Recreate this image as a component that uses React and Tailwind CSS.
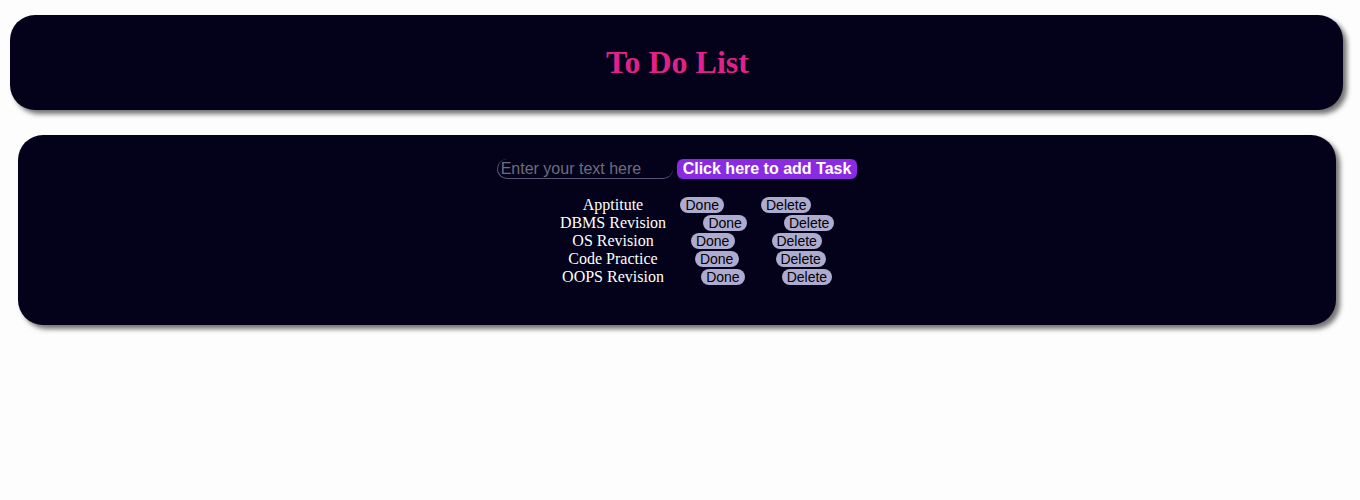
import React, { useState } from 'react';

const initialTasks = ['Apptitute', 'DBMS Revision', 'OS Revision', 'Code Practice', 'OOPS Revision'];

function TaskRow({ name }) {
  return (
    <li className="flex items-center justify-center h-[18px]">
      <span className="text-white text-[16px] leading-[18px]">{name}</span>
      <button className="ml-[37px] h-[16px] w-[44px] rounded-full bg-[#aeabd0] text-black text-[14px] leading-[16px] font-['Liberation_Sans',Arial,sans-serif]">
        Done
      </button>
      <button className="ml-[37px] h-[16px] w-[50px] rounded-full bg-[#aeabd0] text-black text-[14px] leading-[16px] font-['Liberation_Sans',Arial,sans-serif]">
        Delete
      </button>
    </li>
  );
}

export default function App() {
  const [text, setText] = useState('');
  const [tasks, setTasks] = useState(initialTasks);

  return (
    <div className="min-h-[500px] bg-[#fdfdfd] pt-[15px] font-['Liberation_Serif','Times_New_Roman',serif]">
      <header className="ml-[10px] w-[1333px] h-[95px] rounded-[25px] bg-[#03021a] shadow-[4px_4px_5px_rgba(0,0,0,0.55)] flex items-center justify-center">
        <h1 className="text-[32px] font-bold text-[#e0218a] leading-none pb-[1px] pl-[2px]">To Do List</h1>
      </header>

      <main className="ml-[18px] mt-[25px] w-[1318px] h-[190px] rounded-[25px] bg-[#03021a] shadow-[4px_4px_5px_rgba(0,0,0,0.55)] pt-[24px]">
        <div className="flex items-center justify-center gap-[4px]">
          <input
            value={text}
            onChange={(e) => setText(e.target.value)}
            placeholder="Enter your text here"
            className="w-[176px] h-[20px] bg-transparent border-l border-b border-[#5a5578] rounded-[10px] text-white text-[16px] px-[3px] placeholder:text-[#6f6c7e] font-['Liberation_Sans',Arial,sans-serif] outline-none"
          />
          <button
            onClick={() => {
              if (text.trim()) {
                setTasks([...tasks, text.trim()]);
                setText('');
              }
            }}
            className="h-[20px] px-[6px] rounded-[6px] bg-[#8a2be2] text-white font-bold text-[16px] leading-[20px] font-['Liberation_Sans',Arial,sans-serif]"
          >
            Click here to add Task
          </button>
        </div>
        <ul className="mt-[17px] pl-[40px]">
          {tasks.map((t) => (
            <TaskRow key={t} name={t} />
          ))}
        </ul>
      </main>
    </div>
  );
}
